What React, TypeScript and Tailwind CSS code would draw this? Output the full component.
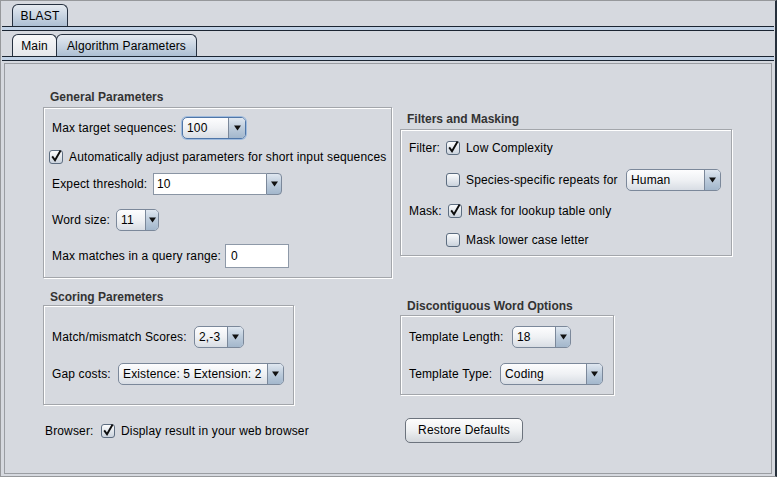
import React from 'react';

const Arrow = () => (
  <svg width="7" height="6" viewBox="0 0 7 6">
    <path d="M0 0.5h7L3.5 5.5z" fill="#111" />
  </svg>
);

interface ComboProps {
  value: string;
  className: string;
  arrow?: string;
  focused?: boolean;
}

const Combo = ({ value, className, arrow = 'w-[16px]', focused = false }: ComboProps) => (
  <div
    className={`flex h-[22px] shrink-0 rounded-[5px] border bg-linear-to-b from-[#fdfdfe] via-[#eff1f4] to-[#d8dde4] ${
      focused ? 'border-[#4f76a8] shadow-[0_0_0_1px_#9fbbdd]' : 'border-[#7b889a]'
    } ${className}`}
  >
    <span className="flex-1 overflow-hidden whitespace-nowrap pl-[4px] leading-[20px]">{value}</span>
    <span
      className={`flex items-center justify-center rounded-r-[4px] border-l border-[#7b889a] bg-linear-to-b from-[#dfe7f0] via-[#bccbdb] to-[#a3b7cc] ${arrow}`}
    >
      <Arrow />
    </span>
  </div>
);

const EditCombo = ({ value, className }: { value: string; className: string }) => (
  <div className={`flex h-[22px] shrink-0 ${className}`}>
    <span className="flex-1 border border-r-0 border-[#8a95a4] bg-white pl-[3px] leading-[20px]">{value}</span>
    <span className="flex w-[16px] items-center justify-center rounded-r-[4px] border border-[#7b889a] bg-linear-to-b from-[#dfe7f0] via-[#bccbdb] to-[#a3b7cc]">
      <Arrow />
    </span>
  </div>
);

const Check = ({ checked = false }: { checked?: boolean }) => (
  <span className="relative block h-[14px] w-[14px] shrink-0 rounded-[3px] border border-[#5d6d80] bg-linear-to-b from-[#fbfcfd] to-[#cbd3dd]">
    {checked && (
      <svg className="absolute left-[-1px] top-[-1px] overflow-visible" width="14" height="14" viewBox="0 0 14 14">
        <path d="M3.2 6.4L6 10.2L11.6 0.6" fill="none" stroke="#0d0d0d" strokeWidth="1.9" />
      </svg>
    )}
  </span>
);

const Tab = ({ label, selected, className }: { label: string; selected: boolean; className: string }) => (
  <div
    className={`flex h-[22px] items-center justify-center rounded-t-[6px] border border-b-0 border-[#263140] ${
      selected ? 'bg-linear-to-b from-[#e6ebf1] to-[#adbfd3]' : 'bg-linear-to-b from-[#f8f9fa] to-[#e4e6ea]'
    } ${className}`}
  >
    {label}
  </div>
);

const Title = ({ children, className }: { children: React.ReactNode; className: string }) => (
  <div className={`h-[14px] pl-[7px] font-bold leading-[14px] tracking-normal text-[#333] ${className}`}>{children}</div>
);

const boxCls = 'border border-[#a3a6ab] shadow-[inset_1px_1px_0_#fff,1px_1px_0_#fff]';

const TabLines = () => (
  <div className="mx-[1px] h-[5px] border-y border-[#1b2532] bg-[#c1d2e6]" />
);

const App = () => {
  return (
    <div className="flex h-[477px] w-[777px] flex-col border-b border-l border-t border-r-2 border-[#96989b] border-r-[#26303c] bg-[#d6d9df] font-['Liberation_Sans',Arial,sans-serif] text-[12px] leading-[14px] tracking-[0.15px] text-black">
      {/* Outer tabs */}
      <div className="flex h-[25px] items-end pl-[11px]">
        <Tab label="BLAST" selected className="w-[56px]" />
      </div>
      <TabLines />

      {/* Inner tabs */}
      <div className="flex h-[25px] items-end pl-[11px]">
        <Tab label="Main" selected={false} className="w-[45px]" />
        <Tab label="Algorithm Parameters" selected className="-ml-[1px] w-[141px]" />
      </div>
      <TabLines />

      {/* Content panel */}
      <div className="mx-[3px] mt-[2px] flex h-[411px] border border-[#9a9da2]">
        {/* Left column */}
        <div className="ml-[38px] flex w-[349px] flex-col">
          <Title className="mt-[26px]">General Parameters</Title>
          <div className={`mt-[3px] flex h-[171px] flex-col ${boxCls}`}>
            <div className="mt-[9px] flex items-center pl-[8px]">
              <span className="w-[130px]">Max target sequences:</span>
              <Combo value="100" className="w-[64px]" arrow="w-[17px]" focused />
            </div>
            <div className="mt-[11px] flex items-center gap-[6px] pl-[5px]">
              <Check checked />
              <span className="whitespace-nowrap">Automatically adjust parameters for short input sequences</span>
            </div>
            <div className="mt-[9px] flex items-center pl-[8px]">
              <span className="w-[101px]">Expect threshold:</span>
              <EditCombo value="10" className="w-[129px]" />
            </div>
            <div className="mt-[14px] flex items-center pl-[8px]">
              <span className="w-[64px]">Word size:</span>
              <Combo value="11" className="w-[43px]" arrow="w-[13px]" />
            </div>
            <div className="mt-[13px] flex items-center pl-[8px]">
              <span className="w-[173px]">Max matches in a query range:</span>
              <div className="h-[24px] w-[64px] border border-[#8e99a8] bg-white pl-[5px] leading-[22px]">0</div>
            </div>
          </div>

          <Title className="mt-[12px]">Scoring Paremeters</Title>
          <div className={`mt-[1px] flex h-[100px] w-[251px] flex-col ${boxCls}`}>
            <div className="mt-[20px] flex items-center pl-[8px]">
              <span className="w-[142px]">Match/mismatch Scores:</span>
              <Combo value="2,-3" className="w-[50px]" />
            </div>
            <div className="mt-[15px] flex items-center pl-[8px]">
              <span className="w-[66px]">Gap costs:</span>
              <Combo value="Existence: 5 Extension: 2" className="w-[166px]" />
            </div>
          </div>

          <div className="mt-[19px] flex h-[14px] items-center pl-[2px]">
            <span className="w-[56px]">Browser:</span>
            <Check checked />
            <span className="ml-[6px]">Display result in your web browser</span>
          </div>
        </div>

        {/* Right column */}
        <div className="ml-[8px] flex flex-col">
          <Title className="mt-[48px]">Filters and Masking</Title>
          <div className={`mt-[3px] flex h-[127px] w-[332px] flex-col ${boxCls}`}>
            <div className="mt-[11px] flex h-[14px] items-center pl-[8px]">
              <span className="w-[37px]">Filter:</span>
              <Check checked />
              <span className="ml-[6px]">Low Complexity</span>
            </div>
            <div className="mt-[14px] flex h-[21px] items-center pl-[45px]">
              <Check />
              <span className="ml-[6px] w-[160px] whitespace-nowrap">Species-specific repeats for</span>
              <Combo value="Human" className="h-[21px] w-[95px]" />
            </div>
            <div className="mt-[14px] flex h-[14px] items-center pl-[8px]">
              <span className="w-[39px]">Mask:</span>
              <Check checked />
              <span className="ml-[6px]">Mask for lookup table only</span>
            </div>
            <div className="mt-[15px] flex h-[14px] items-center pl-[45px]">
              <Check />
              <span className="ml-[6px]">Mask lower case letter</span>
            </div>
          </div>

          <Title className="mt-[43px]">Discontiguous Word Options</Title>
          <div className={`mt-[2px] flex h-[80px] w-[214px] flex-col ${boxCls}`}>
            <div className="mt-[10px] flex items-center pl-[8px]">
              <span className="w-[103px]">Template Length:</span>
              <Combo value="18" className="w-[59px]" arrow="w-[15px]" />
            </div>
            <div className="mt-[15px] flex items-center pl-[8px]">
              <span className="w-[91px]">Template Type:</span>
              <Combo value="Coding" className="w-[103px]" />
            </div>
          </div>

          <button className="ml-[5px] mt-[23px] h-[25px] w-[118px] rounded-[5px] border border-[#6c737d] bg-linear-to-b from-[#fdfdfd] via-[#eef0f2] to-[#d3d7dc] text-center leading-[23px]">
            Restore Defaults
          </button>
        </div>
      </div>
    </div>
  );
};

export default App;
